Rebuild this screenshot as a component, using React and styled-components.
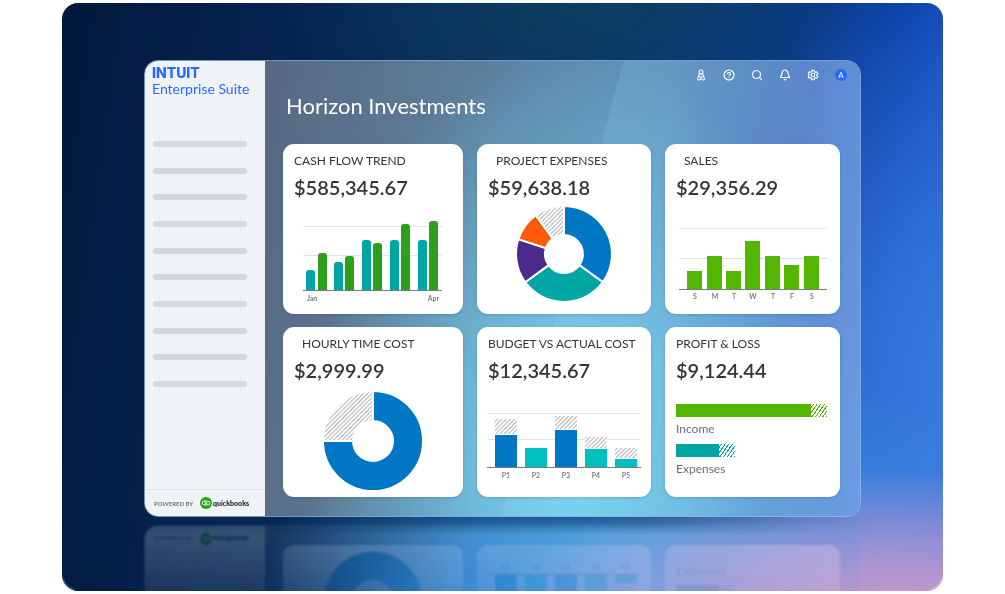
import React from "react";
import styled, { createGlobalStyle } from "styled-components";
import { CircleHelp, Search, Bell } from "lucide-react";

const GlobalStyle = createGlobalStyle`
  *, *::before, *::after { box-sizing: border-box; }
  body {
    margin: 0;
    background: #fff;
    font-family: Lato, "Open Sans", sans-serif;
    color: #33353d;
  }
  h1, h2, p, ul { margin: 0; padding: 0; }
`;

const Page = styled.div`
  padding: 3px 62px;
`;

const Stage = styled.div`
  overflow: hidden;
  border-radius: 16px;
  padding: 57px 82px 0;
  background:
    radial-gradient(ellipse 400px 140px at 95% 103%, #cf9cc6, rgba(186, 150, 210, 0.75) 45%, transparent),
    radial-gradient(ellipse 380px 260px at 66% 100%, #4aa2e6, rgba(61, 146, 224, 0.85) 50%, transparent),
    radial-gradient(ellipse 320px 480px at 106% 70%, #3f80e4, rgba(52, 116, 220, 0.85) 45%, transparent),
    radial-gradient(ellipse 320px 140px at 60% 0%, rgba(14, 66, 94, 0.75), transparent),
    linear-gradient(98deg, #02183b 0%, #03204a 16%, #0a3060 48%, #0a3a8c 76%, #073ba6 88%, #1c55c2 100%);
`;

const Window = styled.div`
  display: flex;
  overflow: hidden;
  border: 1px solid rgba(150, 190, 235, 0.75);
  border-radius: 14px;
  -webkit-box-reflect: below 8px linear-gradient(transparent 82%, rgba(0, 0, 0, 0.1) 86%, rgba(0, 0, 0, 0.24) 100%);
`;

const Floor = styled.div`
  position: relative;
  z-index: 1;
  height: 74px;
  margin: 0 -82px;
  backdrop-filter: blur(1px);

  &::before {
    content: "";
    display: block;
    height: 18px;
    margin: 0 70px;
    background: linear-gradient(rgba(4, 44, 84, 0.5) 0, rgba(4, 44, 84, 0.4) 6px, transparent);
    mask-image: linear-gradient(90deg, transparent, #000 24px, #000 70%, transparent);
  }
`;

const Sidebar = styled.aside`
  display: flex;
  flex-direction: column;
  flex: 0 0 120px;
  background: #eff3f6;
`;

const Brand = styled.div`
  height: 80px;
  padding: 3px 0 0 7px;
  color: #236cff;
`;

const BrandName = styled.div`
  font-family: Inter, sans-serif;
  font-size: 14px;
  line-height: 17px;
  font-weight: 800;
`;

const BrandProduct = styled.div`
  font-size: 14px;
  line-height: 16px;
`;

const NavLines = styled.div`
  display: flex;
  flex-direction: column;
  justify-content: space-between;
  height: 246px;
  margin: 0 18px 0 8px;
`;

const NavLine = styled.span`
  height: 6px;
  border-radius: 3px;
  background: #d4d7db;
`;

const Powered = styled.div`
  display: flex;
  align-items: center;
  height: 27px;
  margin-top: auto;
  padding-left: 9px;
  border-top: 1px solid #dde1e5;
  font-size: 6px;
  font-weight: 600;
  color: #66696f;
  white-space: nowrap;
`;

const QuickBooks = styled.span`
  display: flex;
  align-items: center;
  gap: 1px;
  margin-left: 7px;
  font-size: 7px;
  font-weight: 900;
  color: #222;
`;

const Main = styled.main`
  flex: 1;
  min-width: 0;
  padding: 0 20px 19px 18px;
  background:
    linear-gradient(105deg, transparent 50%, rgba(160, 225, 245, 0.14) 50%, transparent 70%),
    radial-gradient(ellipse 270px 440px at 53% 92%, #7ad3ee, rgba(118, 204, 236, 0.75) 40%, transparent),
    linear-gradient(98deg, #576883 0%, #5b7892 22%, #5c86a8 45%, #5e92bc 62%, #5a86cc 84%, #6c9de4 100%);
`;

const TopBar = styled.div`
  display: flex;
  justify-content: flex-end;
  align-items: center;
  gap: 16px;
  height: 27px;
  margin-right: -7px;
`;

const IconButton = styled.button`
  display: grid;
  place-items: center;
  width: 12px;
  height: 12px;
  padding: 0;
  border: 0;
  background: none;
  color: #fff;
`;

const Avatar = styled(IconButton)`
  border-radius: 50%;
  background: #236cff;
  font: 8px Lato, sans-serif;
`;

const Heading = styled.h1`
  margin: 0 0 20px 3px;
  font-size: 22px;
  line-height: 36px;
  font-weight: 400;
  color: #fff;
`;

const Cards = styled.div`
  display: grid;
  grid-template-columns: 180fr 174fr 175fr;
  gap: 13px 14px;
`;

const CardBox = styled.section`
  min-width: 0;
  height: 170px;
  padding-top: 9px;
  border-radius: 11px;
  background: #fff;
  box-shadow: 0 1px 3px rgba(30, 80, 130, 0.25);
`;

const CardTitle = styled.h2`
  padding-left: ${(p) => (p.$indent ? 19 : 11)}px;
  font-size: 12px;
  line-height: 16px;
  font-weight: 400;
  white-space: nowrap;
`;

const Amount = styled.p`
  margin: 6px 0 2px;
  padding-left: 11px;
  font-size: 20px;
  line-height: 24px;
  font-weight: 600;
`;

const Chart = styled.svg`
  display: block;
  width: 100%;
  height: 113px;
`;

const AxisText = styled.text`
  font-size: 7px;
  font-weight: 600;
  fill: #6b6f78;
`;

const Totals = styled.div`
  padding: 20px 13px 0 11px;
`;

const TotalBar = styled.div`
  display: flex;
  width: ${(p) => p.$width};
  height: 13px;
  color: ${(p) => p.$color};
`;

const Solid = styled.span`
  flex: 1;
  background: currentColor;
`;

const Striped = styled.span`
  width: 16px;
  background: repeating-linear-gradient(-55deg, currentColor 0 1px, #fff 1px 3px);
`;

const TotalLabel = styled.p`
  margin: 4px 0 7px;
  font-size: 12px;
  line-height: 16px;
  color: #6b6f78;
`;

function Card({ title, amount, indent, children }) {
  return (
    <CardBox>
      <CardTitle $indent={indent}>{title}</CardTitle>
      <Amount>{amount}</Amount>
      {children}
    </CardBox>
  );
}

function Hatch({ id }) {
  return (
    <pattern id={id} width="3" height="3" patternUnits="userSpaceOnUse" patternTransform="rotate(45)">
      <rect width="3" height="3" fill="#fff" />
      <rect width="1" height="3" fill="#aeb1b6" />
    </pattern>
  );
}

function Frame({ x1, x2, lines, axis }) {
  return (
    <g shapeRendering="crispEdges">
      {lines.map((y) => (
        <rect key={y} x={x1} y={y} width={x2 - x1} height="1" fill="#dfe5e9" />
      ))}
      <rect x={x1} y={axis} width={x2 - x1} height="1" fill="#777b82" />
    </g>
  );
}

const point = (cx, cy, r, turn) => {
  const a = turn * Math.PI * 2;
  return `${(cx + r * Math.sin(a)).toFixed(2)} ${(cy - r * Math.cos(a)).toFixed(2)}`;
};

function Donut({ cx, cy, outer, inner, slices }) {
  let start = 0;
  return slices.map(([share, fill]) => {
    const end = start + share;
    const large = share > 0.5 ? 1 : 0;
    const d = `M${point(cx, cy, outer, start)}A${outer} ${outer} 0 ${large} 1 ${point(cx, cy, outer, end)}L${point(cx, cy, inner, end)}A${inner} ${inner} 0 ${large} 0 ${point(cx, cy, inner, start)}Z`;
    start = end;
    return <path key={end} d={d} fill={fill} stroke="#fff" strokeWidth="2" />;
  });
}

const cashBars = [
  [23, 69, 0], [35, 52, 1], [51, 61, 0], [62, 55, 1], [79, 39, 0],
  [90, 42, 1], [107, 39, 0], [118, 23, 1], [135, 39, 0], [146, 20, 1],
];
const salesBars = [
  [22, 70, "S"], [42, 55, "M"], [61, 70, "T"], [80, 40, "W"],
  [100, 55, "T"], [119, 64, "F"], [139, 55, "S"],
];
const budgetBars = [
  [18, 51, 35, "#0077c5"], [48, 64, 64, "#00c1bf"], [78, 46, 32, "#0077c5"],
  [108, 65, 53, "#00c1bf"], [138, 75, 64, "#00c1bf"],
];

function Gear() {
  return (
    <svg width="12" height="12" viewBox="0 0 24 24" fill="none" stroke="currentColor" strokeWidth="2.2" strokeLinejoin="round">
      <path d="M10 2.500h4l.8 3 2 1.100 3-.8 2 3.500-2.200 2.100v1.200l2.200 2.100-2 3.500-3-.8-2 1.100-.8 3h-4l-.8-3-2-1.100-3 .8-2-3.500 2.200-2.100v-1.200L2.200 9.300l2-3.500 3 .8 2-1.100z" />
      <circle cx="12" cy="12" r="3.600" />
    </svg>
  );
}

function Person() {
  return (
    <svg width="12" height="12" viewBox="0 0 24 24" fill="none" stroke="currentColor" strokeWidth="2.200" strokeLinejoin="round">
      <circle cx="12" cy="6" r="4" />
      <path d="M9 9 5.500 18.500Q5 22 8 22q2.500 0 4-3 1.500 3 4 3 3 0 2.500-3.500L15 9M9 14l3 4 3-4" />
    </svg>
  );
}

export default function App() {
  return (
    <Page>
      <GlobalStyle />
      <Stage>
        <Window>
          <Sidebar>
            <Brand>
              <BrandName>INTUIT</BrandName>
              <BrandProduct>Enterprise Suite</BrandProduct>
            </Brand>
            <NavLines>
              {Array.from({ length: 10 }, (_, i) => <NavLine key={i} />)}
            </NavLines>
            <Powered>
              POWERED BY
              <QuickBooks>
                <svg width="12" height="12" viewBox="0 0 24 24" fill="none" stroke="#fff" strokeWidth="1.800">
                  <circle cx="12" cy="12" r="12" fill="#2ca01c" stroke="none" />
                  <path d="M10.500 17.500V8H8a3.500 3.500 0 0 0 0 7.500h.8M13.500 6.500V16H16a3.500 3.500 0 0 0 0-7.500h-.8" />
                </svg>
                quickbooks
              </QuickBooks>
            </Powered>
          </Sidebar>
          <Main>
            <TopBar>
              <IconButton aria-label="Assistant"><Person /></IconButton>
              <IconButton aria-label="Help"><CircleHelp size={12} strokeWidth={2.4} /></IconButton>
              <IconButton aria-label="Search"><Search size={12} strokeWidth={2.4} /></IconButton>
              <IconButton aria-label="Notifications"><Bell size={12} strokeWidth={2.4} /></IconButton>
              <IconButton aria-label="Settings"><Gear /></IconButton>
              <Avatar aria-label="Account">A</Avatar>
            </TopBar>
            <Heading>Horizon Investments</Heading>
            <Cards>
              <Card title="CASH FLOW TREND" amount="$585,345.67">
                <Chart viewBox="0 0 180 113">
                  <Frame x1={20} x2={159} lines={[25, 54]} axis={89} />
                  {cashBars.map(([x, y, green]) => (
                    <path key={x} d={`M${x} 89V${y + 3}q0-3 3-3h3q3 0 3 3V89z`} fill={green ? "#2ca01c" : "#00a6a4"} />
                  ))}
                  <AxisText x="24" y="100">Jan</AxisText>
                  <AxisText x="156" y="100" textAnchor="end">Apr</AxisText>
                </Chart>
              </Card>
              <Card title="PROJECT EXPENSES" amount="$59,638.18" indent>
                <Chart viewBox="0 0 174 113">
                  <defs><Hatch id="hatch-project" /></defs>
                  <Donut cx={87} cy={53} outer={48} inner={19} slices={[
                    [0.35, "#0077c5"], [0.3, "#00a6a4"], [0.15, "#4b2a8c"], [0.1, "#ff5a0a"], [0.1, "url(#hatch-project)"],
                  ]} />
                </Chart>
              </Card>
              <Card title="SALES" amount="$29,356.29" indent>
                <Chart viewBox="0 0 175 113">
                  {salesBars.map(([x, y, day]) => (
                    <React.Fragment key={x}>
                      <rect x={x} y={y} width="15" height={88 - y} fill="#53b700" />
                      <AxisText x={x + 8} y="98" textAnchor="middle">{day}</AxisText>
                    </React.Fragment>
                  ))}
                  <Frame x1={14} x2={162} lines={[27]} axis={88} />
                  <rect x="14" y="57" width="148" height="1" fill="#7896a0" fillOpacity="0.3" />
                </Chart>
              </Card>
              <Card title="HOURLY TIME COST" amount="$2,999.99" indent>
                <Chart viewBox="0 0 180 113">
                  <defs><Hatch id="hatch-hourly" /></defs>
                  <Donut cx={90} cy={57} outer={50} inner={20} slices={[
                    [0.75, "#0077c5"], [0.25, "url(#hatch-hourly)"],
                  ]} />
                </Chart>
              </Card>
              <Card title="BUDGET VS ACTUAL COST" amount="$12,345.67">
                <Chart viewBox="0 0 174 113">
                  <defs><Hatch id="hatch-budget" /></defs>
                  <Frame x1={10} x2={164} lines={[29, 55]} axis={83} />
                  {budgetBars.map(([x, y, top, fill], i) => (
                    <React.Fragment key={x}>
                      <rect x={x} y={top} width="22" height={y - top} fill="url(#hatch-budget)" />
                      <rect x={x} y={y - 1} width="22" height="1" fill="#fff" />
                      <rect x={x} y={y} width="22" height={83 - y} fill={fill} />
                      <AxisText x={x + 11} y="94" textAnchor="middle">{`P${i + 1}`}</AxisText>
                    </React.Fragment>
                  ))}
                </Chart>
              </Card>
              <Card title="PROFIT & LOSS" amount="$9,124.44">
                <Totals>
                  <TotalBar $width="100%" $color="#53b700"><Solid /><Striped /></TotalBar>
                  <TotalLabel>Income</TotalLabel>
                  <TotalBar $width="39%" $color="#00a6a4"><Solid /><Striped /></TotalBar>
                  <TotalLabel>Expenses</TotalLabel>
                </Totals>
              </Card>
            </Cards>
          </Main>
        </Window>
        <Floor />
      </Stage>
    </Page>
  );
}
